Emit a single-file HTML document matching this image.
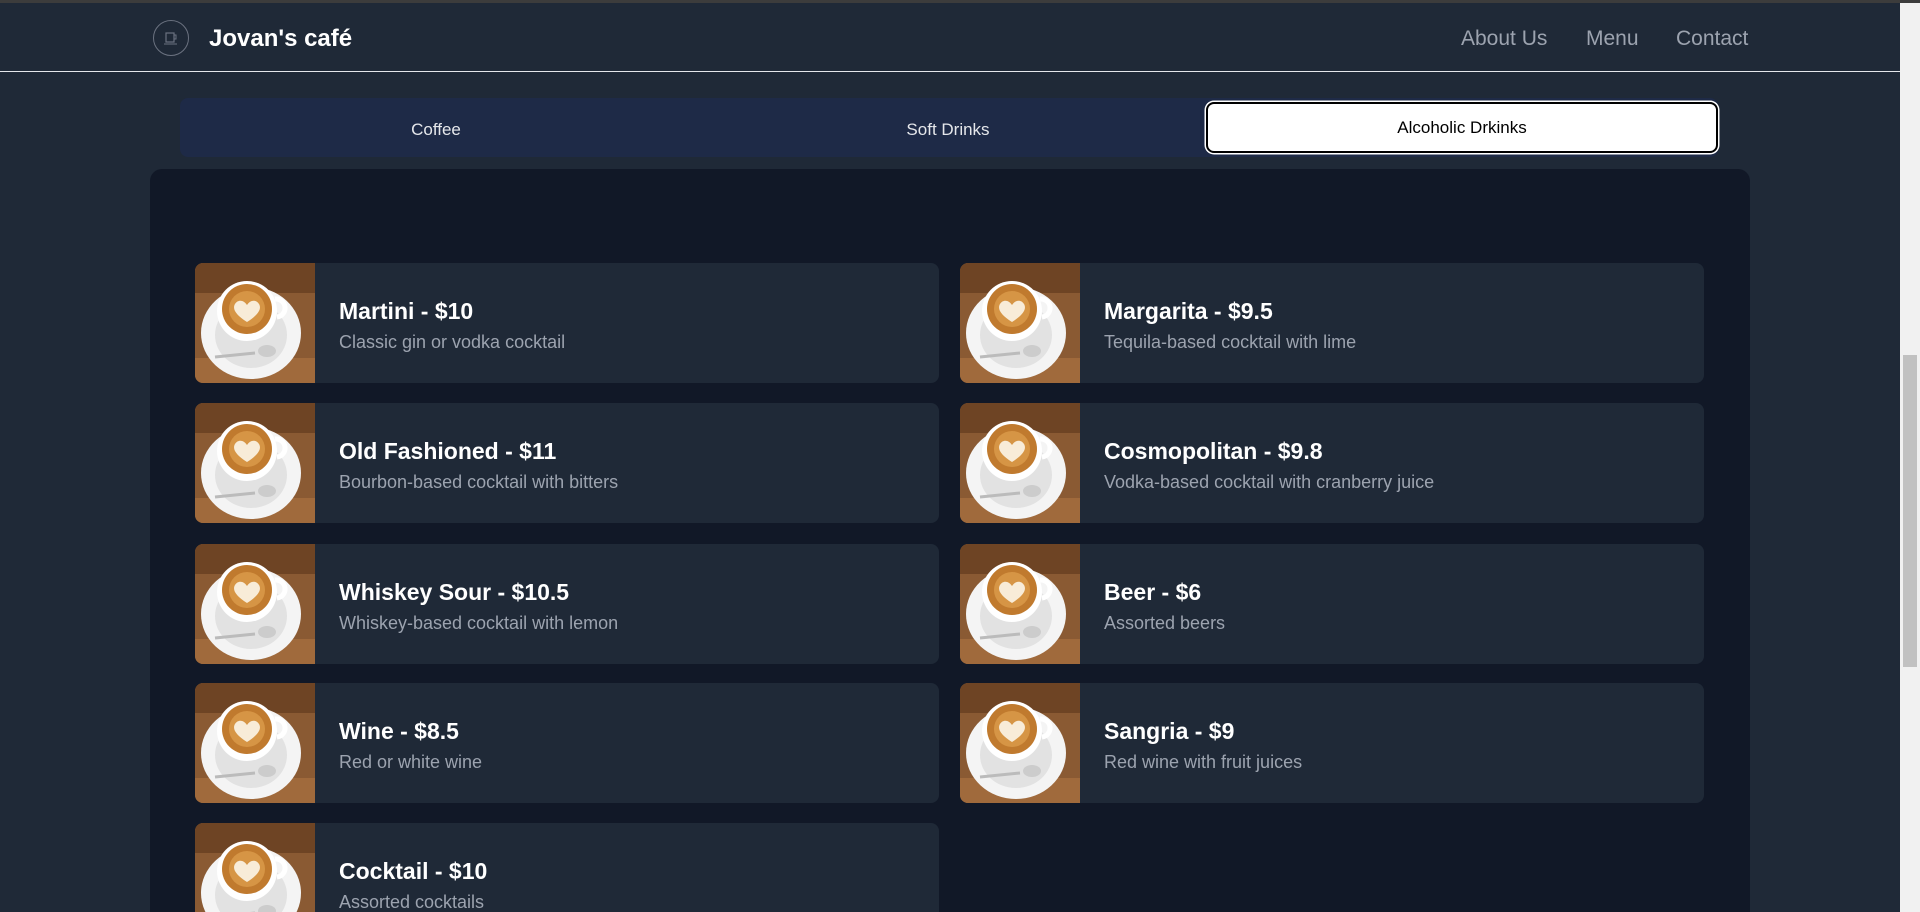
<!DOCTYPE html>
<html><head><meta charset="utf-8"><style>
*{box-sizing:border-box;margin:0;padding:0}
html,body{width:1920px;height:912px;overflow:hidden;background:#1f2937;font-family:"Liberation Sans",sans-serif}
.topbar{position:absolute;left:0;top:0;width:1920px;height:3px;background:#3c3c3c}
header{position:absolute;left:0;top:3px;width:1900px;height:69px;border-bottom:1px solid #e5e7eb;background:#1f2937}
.logo{position:absolute;left:153px;top:17px;width:36px;height:36px;border-radius:50%;border:1.5px solid #6b7280}
.brand{position:absolute;left:209px;top:22px;color:#fff;font-weight:bold;font-size:24px}
nav a{position:absolute;top:24px;color:#9ca3af;font-size:21px;text-decoration:none}
.tabs{position:absolute;left:180px;top:98px;width:1538px;height:59px;background:#1e2a47;border-radius:8px}
.tab{position:absolute;top:2px;height:59px;width:512px;line-height:59px;text-align:center;color:#e5e7eb;font-size:17px}
.tab.active{left:1026px;top:4px;height:51px;line-height:47px;background:#fff;color:#000;border:2px solid #000;border-radius:8px;box-shadow:0 0 0 1.5px #fff}
.panel{position:absolute;left:150px;top:169px;width:1600px;height:743px;background:#111827;border-radius:12px 12px 0 0;overflow:hidden}
.card{position:absolute;width:744px;height:120px;background:#1f2937;border-radius:8px;overflow:hidden}
.card svg{position:absolute;left:0;top:0}
.card h3{position:absolute;left:144px;top:35px;color:#fff;font-size:23px;font-weight:bold}
.card p{position:absolute;left:144px;top:69px;color:#9ca3af;font-size:18px}
.scroll{position:absolute;left:1900px;top:3px;width:20px;height:909px;background:#f1f1f1}
.thumb{position:absolute;left:3px;top:352px;width:14px;height:312px;background:#c1c1c1}
</style></head><body>
<div class="topbar"></div>
<header>
<div class="logo"><svg width="33" height="33" viewBox="0 0 33 33"><rect x="12" y="12" width="8" height="9" fill="none" stroke="#6b7280" stroke-width="1.2"/><path d="M20 14h2v4h-2" fill="none" stroke="#6b7280"/><path d="M10 23h13" stroke="#6b7280"/></svg></div>
<div class="brand">Jovan's café</div>
<nav><a style="left:1461px">About Us</a><a style="left:1586px">Menu</a><a style="left:1676px">Contact</a></nav>
</header>
<div class="tabs">
<div class="tab" style="left:0">Coffee</div>
<div class="tab" style="left:512px">Soft Drinks</div>
<div class="tab active">Alcoholic Drkinks</div>
</div>
<div class="panel">
<div class="card" style="left:45px;top:94px">CUP<h3>Martini - $10</h3><p>Classic gin or vodka cocktail</p></div>
<div class="card" style="left:810px;top:94px">CUP<h3>Margarita - $9.5</h3><p>Tequila-based cocktail with lime</p></div>
<div class="card" style="left:45px;top:234px">CUP<h3>Old Fashioned - $11</h3><p>Bourbon-based cocktail with bitters</p></div>
<div class="card" style="left:810px;top:234px">CUP<h3>Cosmopolitan - $9.8</h3><p>Vodka-based cocktail with cranberry juice</p></div>
<div class="card" style="left:45px;top:375px">CUP<h3>Whiskey Sour - $10.5</h3><p>Whiskey-based cocktail with lemon</p></div>
<div class="card" style="left:810px;top:375px">CUP<h3>Beer - $6</h3><p>Assorted beers</p></div>
<div class="card" style="left:45px;top:514px">CUP<h3>Wine - $8.5</h3><p>Red or white wine</p></div>
<div class="card" style="left:810px;top:514px">CUP<h3>Sangria - $9</h3><p>Red wine with fruit juices</p></div>
<div class="card" style="left:45px;top:654px">CUP<h3>Cocktail - $10</h3><p>Assorted cocktails</p></div>
</div>
<div class="scroll"><div class="thumb"></div></div>
<script>
var s='<svg width="120" height="120" viewBox="0 0 120 120"><rect width="120" height="120" fill="#8a5a33"/><rect x="0" y="0" width="120" height="30" fill="#6e4424"/><rect x="0" y="95" width="120" height="25" fill="#a06a3c"/><ellipse cx="56" cy="70" rx="50" ry="46" fill="#f4f4f4"/><ellipse cx="56" cy="72" rx="36" ry="33" fill="#e2e2e2"/><path d="M80 36a9 9 0 0 1 2 18" fill="none" stroke="#fff" stroke-width="5"/><circle cx="52" cy="48" r="30" fill="#fff"/><circle cx="52" cy="46" r="25" fill="#c07a2e"/><circle cx="52" cy="46" r="18" fill="#d69545"/><path d="M52 59c-11-7-15-13-12-18 3-5 9-4 12 1 3-5 9-6 12-1 3 5-1 11-12 18z" fill="#f8ecd8"/><path d="M20 94l40-4" stroke="#bbb" stroke-width="3"/><ellipse cx="72" cy="88" rx="9" ry="6" fill="#ccc"/></svg>';
document.querySelectorAll('.card').forEach(function(c){c.innerHTML=c.innerHTML.replace('CUP',s)});
</script>
</body></html>
